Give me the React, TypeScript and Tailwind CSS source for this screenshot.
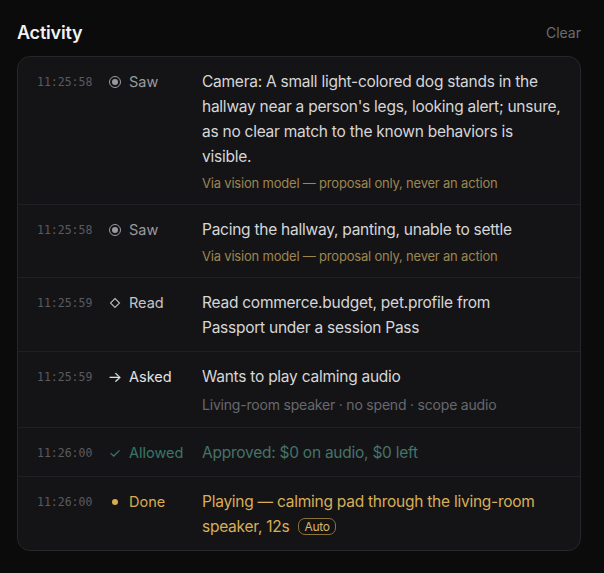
import React from "react";

type Row = {
  time: string;
  icon: React.ReactNode;
  label: string;
  labelClass: string;
  text: React.ReactNode;
  textClass: string;
  sub?: string;
  subClass?: string;
};

const sawIcon = (
  <span className="inline-flex h-[12px] w-[12px] items-center justify-center rounded-full border-[1.5px] border-[#9a9a9e]">
    <span className="h-[6px] w-[6px] rounded-full bg-[#9a9a9e]" />
  </span>
);

const rows: Row[] = [
  {
    time: "11:25:58",
    icon: sawIcon,
    label: "Saw",
    labelClass: "text-[#9a9a9e]",
    text: "Camera: A small light-colored dog stands in the hallway near a person's legs, looking alert; unsure, as no clear match to the known behaviors is visible.",
    textClass: "text-[#d6d6d8]",
    sub: "Via vision model — proposal only, never an action",
    subClass: "text-[#9c8650] text-[13px] leading-[19px]",
  },
  {
    time: "11:25:58",
    icon: sawIcon,
    label: "Saw",
    labelClass: "text-[#9a9a9e]",
    text: "Pacing the hallway, panting, unable to settle",
    textClass: "text-[#d6d6d8]",
    sub: "Via vision model — proposal only, never an action",
    subClass: "text-[#9c8650] text-[13px] leading-[19px]",
  },
  {
    time: "11:25:59",
    icon: (
      <svg width="12" height="12" viewBox="0 0 12 12" className="text-[#b8b8bc]">
        <path d="M6 1.5 L10.5 6 L6 10.5 L1.5 6 Z" fill="none" stroke="currentColor" strokeWidth="1.1" />
      </svg>
    ),
    label: "Read",
    labelClass: "text-[#c4c4c8]",
    text: (
      <>
        Read commerce.budget, pet.profile from
        <br />
        Passport under a session Pass
      </>
    ),
    textClass: "text-[#d6d6d8]",
  },
  {
    time: "11:25:59",
    icon: <span className="text-[15px] leading-none text-[#e2e2e4]">→</span>,
    label: "Asked",
    labelClass: "text-[#e2e2e4]",
    text: "Wants to play calming audio",
    textClass: "text-[#d6d6d8]",
    sub: "Living-room speaker · no spend · scope audio",
    subClass: "text-[#68686d] text-[14px] leading-[22px]",
  },
  {
    time: "11:26:00",
    icon: <span className="text-[14px] leading-none text-[#3a7766]">✓</span>,
    label: "Allowed",
    labelClass: "text-[#3a7766]",
    text: "Approved: $0 on audio, $0 left",
    textClass: "text-[#45736a]",
  },
  {
    time: "11:26:00",
    icon: <span className="h-[6px] w-[6px] rounded-full bg-[#d9ab4c]" />,
    label: "Done",
    labelClass: "text-[#d9ab4c]",
    text: (
      <>
        <span>Playing — calming pad through the living-room speaker, 12s</span>
        <span className="ml-[9px] inline-block rounded-[7px] border border-[#8a7238] px-[5px] align-[1px] text-[12px] leading-[15px] text-[#d7b767]">
          Auto
        </span>
      </>
    ),
    textClass: "text-[#d9ae57]",
  },
];

export default function App() {
  return (
    <div
      className="min-h-[573px] w-[604px] bg-[#0b0b0c] pl-[17px] pr-[23px] pt-[20px]"
      style={{ fontFamily: "Inter, 'Noto Sans', sans-serif" }}
    >
      <div className="flex items-center justify-between pb-[10px]">
        <h2 className="text-[18px] font-semibold leading-[26px] tracking-[-0.2px] text-[#f2f2f3]">Activity</h2>
        <button className="text-[14px] leading-[26px] text-[#6c6c70]">Clear</button>
      </div>
      <div className="overflow-hidden rounded-[13px] border border-[#27272b] bg-[#141417]">
        {rows.map((r, i) => (
          <div
            key={i}
            className={`grid grid-cols-[72px_93px_1fr] pt-[12px] pb-[11px] pl-[19px] pr-[14px] ${
              i > 0 ? "border-t border-[#202024]" : ""
            }`}
          >
            <div
              className="pt-[5px] text-[11.5px] leading-[16px] text-[#5a5a5f]"
              style={{ fontFamily: "'DejaVu Sans Mono', 'Liberation Mono', monospace" }}
            >
              {r.time}
            </div>
            <div className={`flex h-[25px] items-center gap-[8px] text-[14.5px] ${r.labelClass}`}>
              <span className="inline-flex w-[12px] items-center justify-center">{r.icon}</span>
              <span>{r.label}</span>
            </div>
            <div>
              <div className={`text-[15.5px] leading-[25px] tracking-[-0.25px] ${r.textClass}`}>{r.text}</div>
              {r.sub && <div className={`mt-[5px] tracking-[-0.2px] ${r.subClass}`}>{r.sub}</div>}
            </div>
          </div>
        ))}
      </div>
    </div>
  );
}
